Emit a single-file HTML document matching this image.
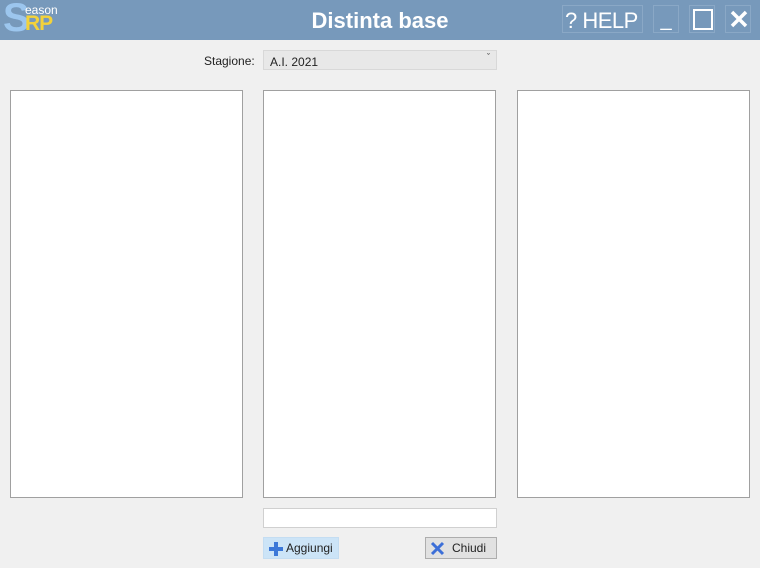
<!DOCTYPE html><html><head><style>
body{margin:0;width:760px;height:568px;background:#f0f0f0;font-family:"Liberation Sans",sans-serif;position:relative;overflow:hidden}
.a{position:absolute}
.tb{left:0;top:0;width:760px;height:40px;background:#7799bb}
.btn{border:1px solid #8aa8c6;color:#fff;box-sizing:border-box;white-space:nowrap;overflow:hidden}
.list{background:#fff;border:1px solid #a0a0a0;box-sizing:border-box;top:90px;height:408px;width:233px}
</style></head><body>
<div class="a tb"></div>
<div class="a" style="left:3px;top:-4px;font-size:40px;color:#9cc6ee;font-weight:bold">S</div>
<div class="a" style="left:25px;top:3px;font-size:12px;color:#fff">eason</div>
<div class="a" style="left:25px;top:12px;font-size:21px;color:#f3d23a;font-weight:bold;letter-spacing:-1px">RP</div>
<div class="a" style="left:0;width:760px;top:8px;text-align:center;color:#fff;font-size:22px;font-weight:bold">Distinta base</div>
<div class="a btn" style="left:562px;top:5px;width:81px;height:28px;font-size:22px;line-height:30px;padding-left:2px;letter-spacing:-0.5px">? HELP</div>
<div class="a btn" style="left:653px;top:5px;width:26px;height:28px;font-size:20px;text-align:center;line-height:28px">_</div>
<div class="a btn" style="left:689px;top:5px;width:26px;height:28px"><div class="a" style="left:3px;top:3px;width:16px;height:17px;border:2px solid #fff"></div></div>
<div class="a btn" style="left:725px;top:5px;width:26px;height:28px"><svg class="a" style="left:3px;top:3px" width="20" height="20"><path d="M3 3L17 17M17 3L3 17" stroke="#fff" stroke-width="3.5"/></svg></div>
<div class="a" style="left:204px;top:54px;font-size:12px;color:#222">Stagione:</div>
<div class="a" style="left:263px;top:50px;width:234px;height:20px;background:#e8e8e8;border:1px solid #d8d8d8;box-sizing:border-box;font-size:12px;padding:4px 6px;color:#222">A.I. 2021<span class="a" style="right:6px;top:1px;font-size:9px">ˇ</span></div>
<div class="a list" style="left:10px"></div>
<div class="a list" style="left:263px"></div>
<div class="a list" style="left:517px"></div>
<div class="a" style="left:263px;top:508px;width:234px;height:20px;background:#fff;border:1px solid #d0d0d0;box-sizing:border-box"></div>
<div class="a" style="left:263px;top:537px;width:76px;height:22px;background:#cce4f7;border:1px solid #c4ddf2;box-sizing:border-box;font-size:12px;color:#222;line-height:20px;padding-left:22px">Aggiungi
<svg class="a" style="left:5px;top:4px" width="14" height="14"><path d="M7 0V14M0 7H14" stroke="#3c78d8" stroke-width="4"/></svg></div>
<div class="a" style="left:425px;top:537px;width:72px;height:22px;background:#e1e1e1;border:1px solid #adadad;box-sizing:border-box;font-size:12px;color:#222;line-height:20px;padding-left:26px">Chiudi
<svg class="a" style="left:4px;top:3px" width="15" height="15"><path d="M2 2L13 13M13 2L2 13" stroke="#3c6fd8" stroke-width="3"/></svg></div>
</body></html>
